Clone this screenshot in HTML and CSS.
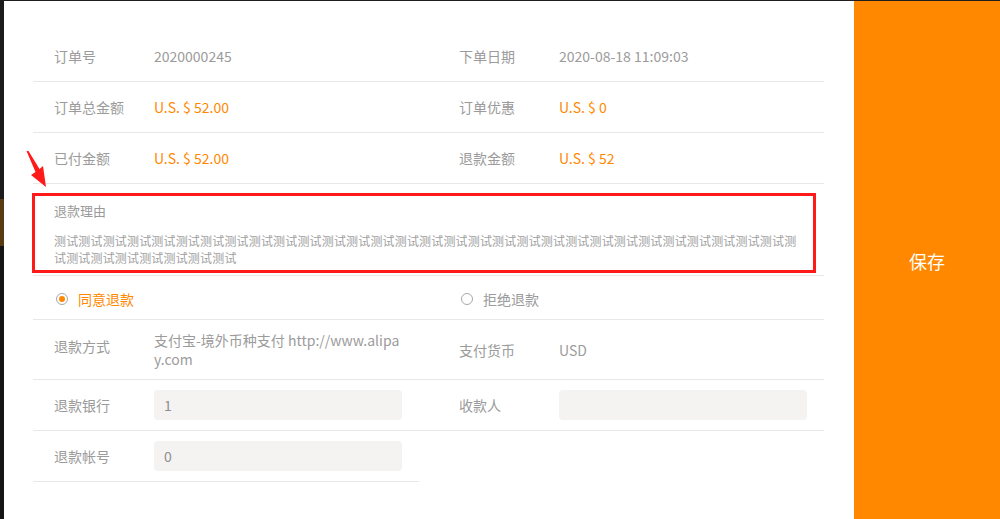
FILE: index.html
```html
<html>
<head>
  <meta charset="UTF-8">
  <meta name="viewport" content="width=device-width, initial-scale=1.0">
  <title>退款审核</title>
  <link rel="stylesheet" href="styles.css">
</head>
<body>
  <div class="side-strip"></div>
  <div class="modal">
    <div class="modal-body">
      <div class="info-grid">
        <div class="cell">
          <span class="label">订单号</span>
          <span class="value">2020000245</span>
        </div>
        <div class="cell right">
          <span class="label">下单日期</span>
          <span class="value">2020-08-18 11:09:03</span>
        </div>

        <div class="cell">
          <span class="label">订单总金额</span>
          <span class="value price">U.S. $ 52.00</span>
        </div>
        <div class="cell right">
          <span class="label">订单优惠</span>
          <span class="value price">U.S. $ 0</span>
        </div>

        <div class="cell">
          <span class="label">已付金额</span>
          <span class="value price">U.S. $ 52.00</span>
        </div>
        <div class="cell right">
          <span class="label">退款金额</span>
          <span class="value price">U.S. $ 52</span>
        </div>

        <div class="cell reason">
          <div class="reason-label">退款理由</div>
          <div class="reason-text">测试测试测试测试测试测试测试测试测试测试测试测试测试测试测试测试测试测试测试测试测试测试测试测试测试测试测试测试测试测试测试测试测试测试测试测试测试测试</div>
          <!-- annotation box + arrow -->
          <div class="highlight"></div>
          <svg class="pointer" width="24" height="40" viewBox="0 0 24 40">
            <path d="M0.5 0 L2.5 0 L13.5 18 L17 15 L20 36 L5 24 L9.5 21 Z" fill="#ff1a1a"/>
          </svg>
        </div>

        <div class="cell radio-cell">
          <span class="radio checked"></span>
          <span class="radio-text active">同意退款</span>
        </div>
        <div class="cell right radio-cell">
          <span class="radio"></span>
          <span class="radio-text">拒绝退款</span>
        </div>

        <div class="cell tall method">
          <span class="label">退款方式</span>
          <span class="value wrap">支付宝-境外币种支付 http://www.alipay.com</span>
        </div>
        <div class="cell right tall">
          <span class="label">支付货币</span>
          <span class="value">USD</span>
        </div>

        <div class="cell">
          <span class="label">退款银行</span>
          <input type="text" class="form-input" value="1">
        </div>
        <div class="cell right">
          <span class="label">收款人</span>
          <input type="text" class="form-input" value="">
        </div>

        <div class="cell">
          <span class="label">退款帐号</span>
          <input type="text" class="form-input" value="0">
        </div>
      </div>
    </div>
  </div>
  <div class="save-panel">保存</div>
</body>
</html>
```

FILE: styles.css
```css
:root {
  --orange: #ff8800;
  --text-gray: #9b9b9b;
  --line: #e8e8e8;
  --input-bg: #f4f3f2;
  --mark: #ff1a1a;
}

* {
  margin: 0;
  padding: 0;
  box-sizing: border-box;
  font-family: 'Noto Sans CJK SC', 'Noto Sans', sans-serif;
}

body {
  background: #1e1e1e;
  height: 100vh;
  display: flex;
  padding-top: 1px;
  overflow: hidden;
}

.side-strip {
  width: 4px;
  background: linear-gradient(#1c1c1c 0, #1c1c1c 198px, #5a3a12 198px, #5a3a12 245px, #151515 245px);
}

.modal {
  flex: 1;
  background: #fff;
}

.modal-body {
  padding: 30px 0 0 29px;
}

.info-grid {
  display: grid;
  grid-template-columns: 386px 405px;
  width: 791px;
}

.cell {
  display: flex;
  align-items: center;
  height: 51px;
  padding-left: 21px;
  border-bottom: 1px solid var(--line);
  font-size: 14px;
  color: var(--text-gray);
}

.cell.right {
  padding-left: 40px;
}

.label {
  width: 100px;
  flex-shrink: 0;
}

.value.price {
  color: var(--orange);
}

.value.wrap {
  width: 248px;
  line-height: 19px;
  word-break: break-all;
}

.cell.tall {
  height: 60px;
}

.cell.method .label {
  padding-bottom: 8px;
}

.cell.reason {
  grid-column: 1 / -1;
  position: relative;
  height: 92px;
  display: block;
  padding-top: 17px;
}

.reason-label {
  font-size: 13px;
  line-height: 20px;
}

.reason-text {
  margin-top: 11px;
  font-size: 12px;
  line-height: 17px;
  letter-spacing: 0.17px;
  max-width: 746px;
  color: #a0a0a0;
}

.highlight {
  position: absolute;
  left: -1px;
  top: 9px;
  width: 784px;
  height: 80px;
  border: 3px solid var(--mark);
}

.pointer {
  position: absolute;
  left: -7px;
  top: -33px;
}

.cell.radio-cell {
  height: 44px;
  padding-top: 3px;
}

.radio {
  width: 12px;
  height: 12px;
  margin-left: 2px;
  border: 1px solid #a8a8a8;
  border-radius: 50%;
  display: flex;
  align-items: center;
  justify-content: center;
}

.radio.checked::after {
  content: '';
  width: 6px;
  height: 6px;
  border-radius: 50%;
  background: var(--orange);
}

.radio-text {
  margin-left: 10px;
}

.radio-text.active {
  color: var(--orange);
}

.form-input {
  width: 248px;
  height: 30px;
  border: none;
  border-radius: 4px;
  background: var(--input-bg);
  padding-left: 10px;
  font-size: 14px;
  color: #8e8e8e;
}

.form-input:focus {
  outline: none;
}

.save-panel {
  width: 146px;
  background: var(--orange);
  color: #fff;
  font-size: 18px;
  display: flex;
  align-items: center;
  justify-content: center;
  padding-top: 2px;
}
```
